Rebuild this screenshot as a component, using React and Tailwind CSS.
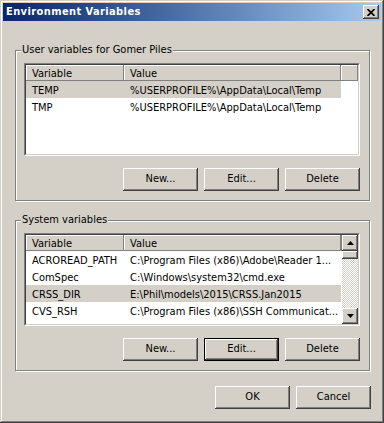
import React from "react";

const userVars = [
  { name: "TEMP", value: "%USERPROFILE%\\AppData\\Local\\Temp", selected: true },
  { name: "TMP", value: "%USERPROFILE%\\AppData\\Local\\Temp" },
];

const systemVars = [
  { name: "ACROREAD_PATH", value: "C:\\Program Files (x86)\\Adobe\\Reader 1..." },
  { name: "ComSpec", value: "C:\\Windows\\system32\\cmd.exe" },
  { name: "CRSS_DIR", value: "E:\\Phil\\models\\2015\\CRSS.Jan2015", selected: true },
  { name: "CVS_RSH", value: "C:\\Program Files (x86)\\SSH Communicat..." },
  { name: "asc", value: "C:\\Tools\\bin" },
];

const raised =
  "shadow-[inset_-1px_-1px_#404040,inset_1px_1px_#ffffff,inset_-2px_-2px_#808080,inset_2px_2px_#d4d0c8]";

// classic 3d push button
const Button = ({ children, isDefault }) => (
  <div
    className={`w-[75px] h-[23px] ${isDefault ? "border border-black" : ""} bg-[#d4d0c8]`}
  >
    <div className={`w-full h-full flex items-center justify-center ${raised}`}>
      {children}
    </div>
  </div>
);

const Arrow = ({ down }) => (
  <svg width="7" height="4" viewBox="0 0 7 4">
    <path d={down ? "M0 0H7L3.5 4Z" : "M0 4H7L3.5 0Z"} fill="black" />
  </svg>
);

const Scrollbar = () => (
  <div className="w-[16px] flex flex-col bg-[#d4d0c8]">
    <div className={`h-[16px] flex items-center justify-center ${raised}`}>
      <Arrow />
    </div>
    <div className={`h-[8px] ${raised}`} />
    <div className="flex-1 bg-[repeating-conic-gradient(#ffffff_0%_25%,#d4d0c8_0%_50%)] bg-[length:2px_2px]" />
    <div className={`h-[16px] flex items-center justify-center ${raised}`}>
      <Arrow down />
    </div>
  </div>
);

const VarList = ({ rows, scroll }) => (
  <div className="w-[336px] h-[93px] border border-t-[#808080] border-l-[#808080] border-r-white border-b-white">
    <div className="w-full h-full border border-t-[#404040] border-l-[#404040] border-r-[#d4d0c8] border-b-[#d4d0c8] bg-white flex overflow-hidden">
      <div className="flex-1 flex flex-col min-w-0">
        <div className="h-[16px] flex shrink-0 bg-[#d4d0c8] leading-[13px]">
          <div className="w-[98px] pl-[6px] pt-[2px] shadow-[inset_-1px_-1px_#808080,inset_1px_1px_#ffffff]">
            Variable
          </div>
          <div className="w-[217px] pl-[6px] pt-[2px] shadow-[inset_-1px_-1px_#808080,inset_1px_1px_#ffffff]">
            Value
          </div>
          <div className="flex-1 shadow-[inset_-1px_-1px_#808080,inset_1px_1px_#ffffff]" />
        </div>
        {rows.map((r) => (
          <div key={r.name} className="h-[17px] flex shrink-0">
            <div
              className={`w-[315px] flex items-start pt-[3px] leading-[13px] ${r.selected ? "bg-[#d4d0c8]" : ""}`}
            >
              <div className="w-[98px] pl-[6px] whitespace-nowrap overflow-hidden">{r.name}</div>
              <div className="w-[217px] pl-[6px] whitespace-nowrap overflow-hidden">
                {r.value}
              </div>
            </div>
          </div>
        ))}
      </div>
      {scroll && <Scrollbar />}
    </div>
  </div>
);

const Group = ({ label, rows, scroll, defaultEdit }) => (
  <div className="w-[355px] border border-[#808080] shadow-[inset_1px_1px_#ffffff,1px_1px_#ffffff] flex flex-col pl-[8px] pr-[9px]">
    <div className="-mt-[8px] -ml-[3px] self-start px-[1px] bg-[#d4d0c8] leading-[14px]">
      {label}
    </div>
    <div className="mt-[6px]">
      <VarList rows={rows} scroll={scroll} />
    </div>
    <div className="flex justify-end gap-[6px] mt-[12px] mb-[9px]">
      <Button>New...</Button>
      <Button isDefault={defaultEdit}>Edit...</Button>
      <Button>Delete</Button>
    </div>
  </div>
);

export default function App() {
  return (
    <div className="w-[384px] h-[423px] bg-[#d4d0c8] p-[3px] flex flex-col font-['DejaVu_Sans_Condensed','DejaVu_Sans',sans-serif] text-[11px] text-black shadow-[inset_-1px_-1px_#404040,inset_1px_1px_#d4d0c8,inset_-2px_-2px_#808080,inset_2px_2px_#ffffff]">
      <div className="h-[18px] flex items-center justify-between pl-[3px] pr-[2px] bg-gradient-to-r from-[#0a246a] to-[#a6caf0]">
        <span className="text-white font-bold text-[11px] tracking-[0.4px]">Environment Variables</span>
        <div className={`w-[16px] h-[14px] bg-[#d4d0c8] flex items-center justify-center ${raised}`}>
          <svg width="8" height="7" viewBox="0 0 8 7">
            <path d="M0.5 0L7.5 7M7.5 0L0.5 7" stroke="black" strokeWidth="1.7" />
          </svg>
        </div>
      </div>
      <div className="flex flex-col pl-[12px]">
        <div className="mt-[29px]">
          <Group label="User variables for Gomer Piles" rows={userVars} />
        </div>
        <div className="mt-[19px]">
          <Group label="System variables" rows={systemVars} scroll defaultEdit />
        </div>
        <div className="flex justify-end gap-[6px] w-[356px] mt-[15px]">
          <Button>OK</Button>
          <Button>Cancel</Button>
        </div>
      </div>
    </div>
  );
}
